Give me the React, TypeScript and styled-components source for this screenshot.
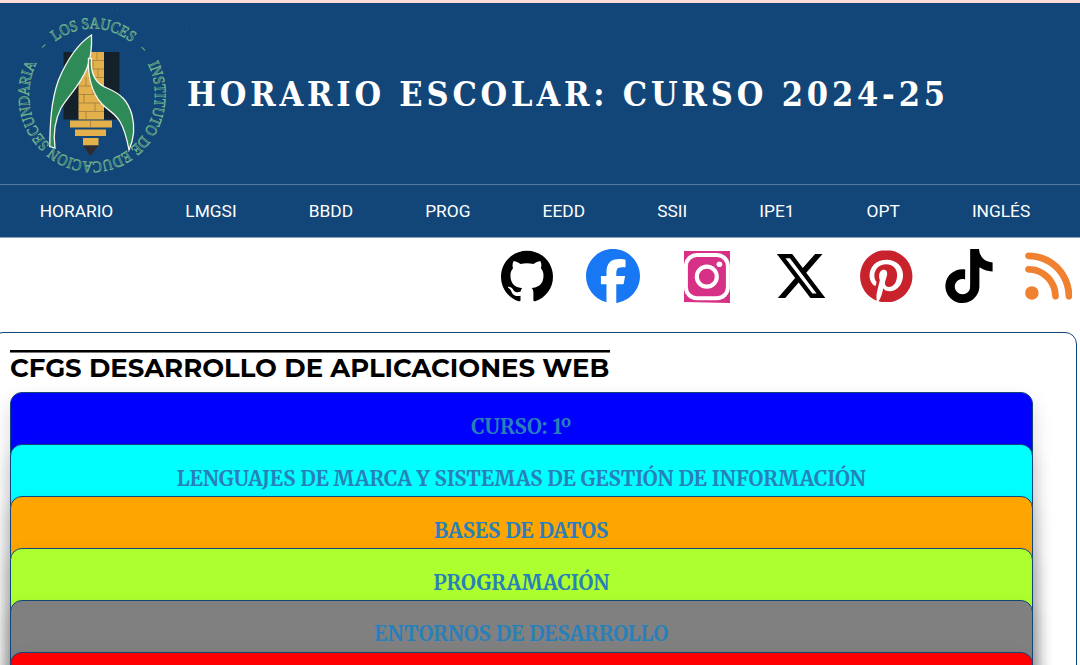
import React from 'react';
import styled, { createGlobalStyle } from 'styled-components';
import { SiGithub, SiFacebook, SiPinterest, SiTiktok } from 'react-icons/si';
import { FaXTwitter, FaRss } from 'react-icons/fa6';

const navy = '#134678';

const GlobalStyle = createGlobalStyle`
  * { box-sizing: border-box; }
  html, body { margin: 0; height: 100%; overflow: hidden; background: #fff; }
  h1, h2, h3 { margin: 0; }
`;

const Page = styled.div`
  height: 665px;
  overflow: hidden;
  display: flex;
  flex-direction: column;
`;

const Header = styled.header`
  flex: none;
  height: 184px;
  border-top: 3px solid #fbdcd8;
  background: ${navy};
  display: flex;
  align-items: center;
  padding-left: 10px;
`;

const Logo = styled.svg`
  flex: none;
  width: 165px;
  height: 175px;
  overflow: visible;
`;

const Title = styled.h1`
  margin-left: 12px;
  color: #fff;
  font: 700 34px/46px 'Roboto Slab', 'DejaVu Serif Condensed', 'DejaVu Serif', serif;
  font-stretch: condensed;
  letter-spacing: 3.83px;
  white-space: nowrap;
`;

const Nav = styled.nav`
  flex: none;
  height: 54px;
  background: ${navy};
  border-top: 1px solid #54799d;
  border-bottom: 1px solid #89a3bc;
  padding: 0 0 1px 39.7px;
  display: flex;
  align-items: center;
  gap: 72.1px;
`;

const NavLink = styled.a`
  color: #fff;
  font: 400 17.33px/24px Roboto, sans-serif;
  white-space: nowrap;
`;

const Social = styled.div`
  flex: none;
  height: 94px;
  padding: 11px 8px 0 0;
  display: flex;
  justify-content: flex-end;
  align-items: flex-start;
`;

const SocialLink = styled.a<{ $w: number; $h: number; $gap?: number; $top?: number; $color?: string }>`
  display: flex;
  width: ${p => p.$w}px;
  height: ${p => p.$h}px;
  margin: ${p => p.$top ?? 0}px ${p => p.$gap ?? 0}px 0 0;
  color: ${p => p.$color ?? '#000'};
  svg { width: 100%; height: 100%; }
`;

const Panel = styled.main`
  flex: none;
  width: 1086px;
  height: 500px;
  margin-left: -9px;
  border: 1px solid ${navy};
  border-radius: 12px;
  padding: 17px 0 0 18px;
`;

const Heading = styled.h2`
  width: 599.5px;
  height: 42px;
  color: #000;
  font: 700 25.92px/32px Montserrat, Inter, sans-serif;
  white-space: nowrap;
  &::before {
    content: '';
    display: block;
    height: 2px;
    background: #000;
    box-shadow: 0 1px 0 #777;
  }
`;

const Stack = styled.section`
  width: 1022.5px;
`;

const Card = styled.article<{ $fill: string }>`
  height: 300px;
  margin-bottom: -248.1px;
  position: relative;
  padding-top: 17.8px;
  border: 1px solid ${navy};
  border-radius: 12px;
  background: ${p => p.$fill};
  box-shadow: 0 10px 20px rgba(0, 0, 0, 0.16);
  text-align: center;
`;

const CardTitle = styled.h3`
  color: #2980b9;
  font: 700 20.35px/32px Merriweather, 'DejaVu Serif Condensed', 'DejaVu Serif', serif;
  white-space: nowrap;
`;

const links = ['HORARIO', 'LMGSI', 'BBDD', 'PROG', 'EEDD', 'SSII', 'IPE1', 'OPT', 'INGLÉS'];

const subjects = [
  { name: 'CURSO: 1º', fill: '#0000ff' },
  { name: 'LENGUAJES DE MARCA Y SISTEMAS DE GESTIÓN DE INFORMACIÓN', fill: '#00ffff' },
  { name: 'BASES DE DATOS', fill: '#ffa500' },
  { name: 'PROGRAMACIÓN', fill: '#adff2f' },
  { name: 'ENTORNOS DE DESARROLLO', fill: '#808080' },
  { name: '', fill: '#ff0000' },
];

const SchoolLogo = () => (
  <Logo viewBox="10 6 165 175">
    <defs>
      <path id="ringTop" d="M29.5 95.5 A63 67 0 0 1 155.5 95.5" />
      <path id="ringRest" d="M148 64 A63 67 0 1 1 37 62" />
    </defs>
    <path d="M63.5 52H119.5V119.5H63.5Z" fill="#14212b" />
    <path d="M90 52H104V119.5H78.5V77Z" fill="#e3b04b" />
    <path d="M70 120.5H112V127.5H70ZM75 129.5H106V136H75ZM83 138H98.5V145.5H83Z" fill="#e3b04b" />
    <path d="M83 145.5H98.5L90.5 156Z" fill="#2d2c30" />
    <path
      d="M90 60.5H104M88 69H104M88 77.5H104M79 86H104M79 94.5H104M79 103H104M79 111.5H104M97 52V60M93 60V69M98 69V77M86 77V86M93 86V94M84 94V103M95 103V111M86 111V119M90.5 120.5V127.5"
      stroke="#8a7040"
      strokeWidth=".6"
    />
    <path
      d="M91.5 35C79 43 67 60 58.5 80C51 101 50 124 49.8 146.5L55 148C53 134 54 122 61 108C68 96 80 86 87 68C91 58 92 47 91.5 35Z"
      fill="#2e8b57"
      stroke="#f4f5ed"
      strokeWidth="1.3"
    />
    <path
      d="M88.5 58.5C87.5 74 91 92 102 104C112 115 122 112 129 150C134 139 135 127 132 115C128 101 121 94 108 88.5C96 84 90 75 91.5 58.5Z"
      fill="#2e8b57"
      stroke="#f4f5ed"
      strokeWidth="1.3"
    />
    <g fill="#1b5a6e" stroke="#74b48f" strokeWidth=".7" fontFamily="Liberation Serif, serif" fontSize="16">
      <text textLength="82" lengthAdjust="spacingAndGlyphs">
        <textPath href="#ringTop" startOffset="62">LOS SAUCES</textPath>
      </text>
      <text textLength="268" lengthAdjust="spacingAndGlyphs">
        <textPath href="#ringRest">INSTITUTO DE EDUCACION SECUNDARIA</textPath>
      </text>
    </g>
    <path d="M42 47.5L45.5 44.5M141.5 47L145 50.5" stroke="#4d9f78" strokeWidth="1.3" />
    <path d="M186 30h1M117 9h1" stroke="#2d6480" />
  </Logo>
);

const InstagramMark = () => (
  <svg viewBox="0 0 46 52" preserveAspectRatio="none">
    <path d="M0 0H46V52L0 51Z" fill="#d63087" />
    <rect x="1.9" y="4" width="42" height="43.2" rx="11" fill="none" stroke="#fff" strokeWidth="4" />
    <circle cx="22.8" cy="25.7" r="10" fill="none" stroke="#fff" strokeWidth="4.2" />
    <circle cx="35.4" cy="13.2" r="2.8" fill="#fff" />
  </svg>
);

export default function App() {
  return (
    <>
      <GlobalStyle />
      <Page>
        <Header>
          <SchoolLogo />
          <Title>HORARIO ESCOLAR: CURSO 2024-25</Title>
        </Header>
        <Nav>
          {links.map(l => <NavLink key={l}>{l}</NavLink>)}
        </Nav>
        <Social>
          <SocialLink $w={52} $h={52} $gap={33} $top={0.6}><SiGithub /></SocialLink>
          <SocialLink $w={54} $h={54} $gap={44} $color="#1877f2"><SiFacebook /></SocialLink>
          <SocialLink $w={46} $h={52} $gap={44} $top={1.5}><InstagramMark /></SocialLink>
          <SocialLink $w={54} $h={54} $gap={32}><FaXTwitter /></SocialLink>
          <SocialLink $w={52.5} $h={52.5} $gap={32.5} $top={0.7} $color="#c8232c"><SiPinterest /></SocialLink>
          <SocialLink $w={48} $h={54} $gap={31.5}><SiTiktok viewBox="1.4 0 21.2 24" preserveAspectRatio="none" /></SocialLink>
          <SocialLink $w={47.5} $h={54} $color="#f08130"><FaRss /></SocialLink>
        </Social>
        <Panel>
          <Heading>CFGS DESARROLLO DE APLICACIONES WEB</Heading>
          <Stack>
            {subjects.map(s => (
              <Card key={s.fill} $fill={s.fill}>
                <CardTitle>{s.name}</CardTitle>
              </Card>
            ))}
          </Stack>
        </Panel>
      </Page>
    </>
  );
}
